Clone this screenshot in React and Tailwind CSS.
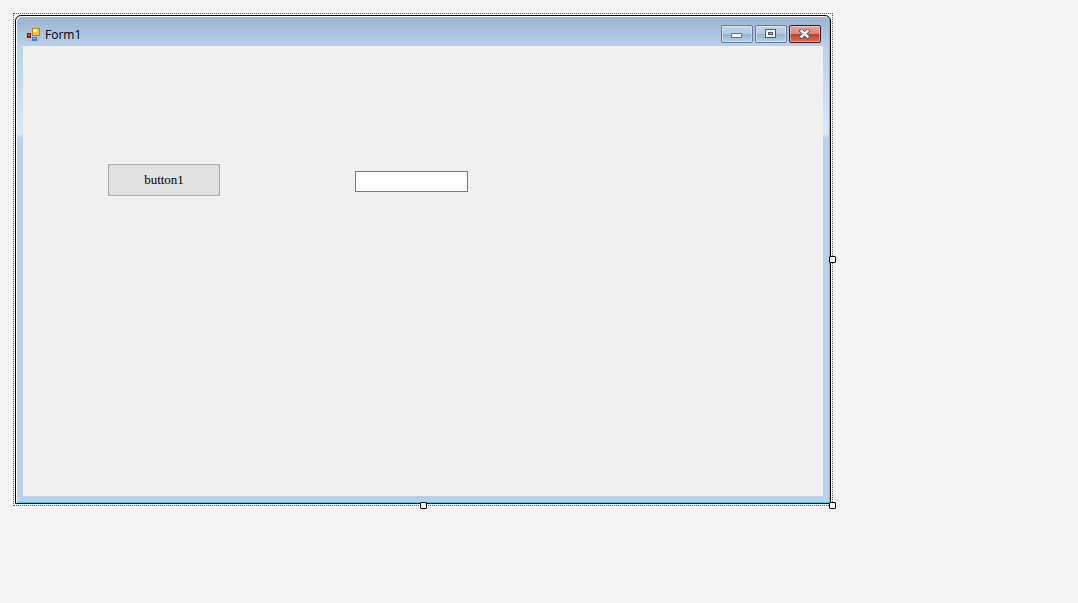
function AppIcon() {
  return (
    <svg width="14" height="14" viewBox="0 0 14 14" aria-hidden="true" shapeRendering="crispEdges">
      <rect x="0.5" y="0.5" width="12" height="12" fill="none" stroke="#b4b9be" />
      <rect x="6" y="0" width="8" height="8" fill="#b08420" />
      <rect x="7" y="1" width="6" height="6" fill="#f4c732" />
      <rect x="7" y="1" width="4" height="3" fill="#fff0a0" />
      <rect x="1" y="5" width="4" height="5" fill="#8e1513" />
      <rect x="2" y="6" width="2" height="2" fill="#e8554a" />
      <rect x="6" y="9" width="5" height="4" fill="#3f74cf" />
      <rect x="7" y="10" width="3" height="1" fill="#9cc6f7" />
    </svg>
  );
}

const captionButton =
  "flex h-[18px] w-8 items-center justify-center rounded-[2px] border shadow-[inset_0_0_0_1px_rgba(255,255,255,0.4)]";
const blueButton =
  "border-[#657d9c] bg-[linear-gradient(#c3d6e9_0%,#b3cae1_48%,#93b1cf_50%,#b5d0ea_100%)]";
const redButton =
  "border-[#47141c] bg-[linear-gradient(#e8a79d_0%,#d98577_48%,#b8412b_50%,#d4705a_100%)]";

function CaptionButtons() {
  return (
    <div className="flex gap-0.5">
      <button type="button" aria-label="Minimize" className={`${captionButton} ${blueButton}`}>
        <svg width="12" height="10" viewBox="0 0 12 10" shapeRendering="crispEdges">
          <rect x="0.5" y="4.5" width="10" height="4" fill="#f7f7f7" stroke="#6b7180" />
        </svg>
      </button>
      <button type="button" aria-label="Maximize" className={`${captionButton} ${blueButton}`}>
        <svg width="12" height="10" viewBox="0 0 12 10" shapeRendering="crispEdges">
          <rect x="0.5" y="0.5" width="10" height="8" fill="#f7f7f7" stroke="#535666" />
          <rect x="3.5" y="3.5" width="4" height="2" fill="#a8c0d8" stroke="#535666" />
        </svg>
      </button>
      <button type="button" aria-label="Close" className={`${captionButton} ${redButton}`}>
        <svg width="12" height="10" viewBox="0 0 12 10">
          <path d="M2.500 2l6 5.500M8.500 2l-6 5.500" stroke="#535666" strokeWidth="4.200" strokeLinecap="square" />
          <path d="M2.500 2l6 5.500M8.500 2l-6 5.500" stroke="#f7f7f7" strokeWidth="2.400" strokeLinecap="square" />
        </svg>
      </button>
    </div>
  );
}

function Handle({ place, label }) {
  return (
    <span
      title={label}
      className={`absolute size-[7px] rounded-[1px] border border-black bg-white ${place}`}
    />
  );
}

export default function App() {
  return (
    <main className="min-h-screen bg-[#f5f5f5] p-[13px] pr-[245px]">
      <div className="relative border border-dotted border-[#555555] p-px">
        <section className="rounded-t-md border border-black bg-[#b9d1ea] shadow-[inset_1px_1px_0_#ffffff,inset_-1px_-1px_0_#2ad4f0]">
          <header className="mx-px mt-px flex h-[29px] items-center justify-between rounded-t-[5px] bg-[linear-gradient(#99b4d1,#b9d1ea)] pt-1 pr-2 pl-[9px]">
            <div className="flex items-center gap-[5px] pt-0.5">
              <AppIcon />
              <h1 className="font-['Open_Sans',sans-serif] text-xs leading-4 text-black">Form1</h1>
            </div>
            <CaptionButtons />
          </header>
          <div className="mx-px mb-px bg-[linear-gradient(#b9d1ea_0px,#dce8f6_88px,#b9d1ea_92px)] px-1.5 pb-1.5">
            <form
              className="flex min-h-[450px] items-start gap-[135px] bg-[#f0f0f0] pt-[118px] pl-[85px]"
              onSubmit={(e) => e.preventDefault()}
            >
              <button
                type="button"
                className="h-8 w-28 border border-[#adadad] bg-[#e1e1e1] font-['Liberation_Serif',serif] text-[13px] leading-4 text-black"
              >
                button1
              </button>
              <input
                type="text"
                aria-label="textBox1"
                className="mt-[7px] h-[21px] w-[113px] border border-[#7a7a7a] bg-white px-1 text-xs"
              />
            </form>
          </div>
        </section>
        <Handle place="top-1/2 -right-1 -mt-1" label="Resize width" />
        <Handle place="-bottom-1 left-1/2 -ml-[3px]" label="Resize height" />
        <Handle place="-right-1 -bottom-1" label="Resize both" />
      </div>
    </main>
  );
}
